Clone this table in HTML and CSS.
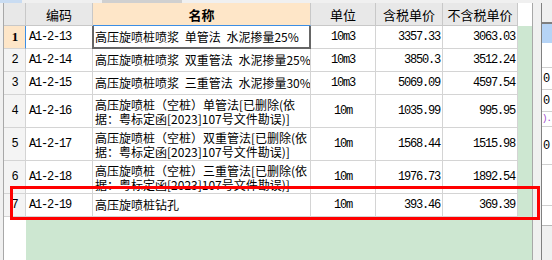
FILE: index.html
```html
<!DOCTYPE html>
<html lang="zh-CN">
<head>
<meta charset="utf-8">
<title>定额列表</title>
<link rel="stylesheet" href="styles.css">
</head>
<body>
<div class="tabs"><span class="tab-a"></span><span class="tab-b"></span></div>
<div class="main">
  <div class="gutter"></div>
  <div class="grid">
    <div class="h">&nbsp;</div>
    <div class="h">编码</div>
    <div class="h h-name">名称</div>
    <div class="h">单位</div>
    <div class="h">含税单价</div>
    <div class="h">不含税单价</div>
    <div class="h-fill"></div>

    <div class="c num num-cur">1</div>
    <div class="c code">A1-2-13</div>
    <div class="c name sel">高压旋喷桩喷浆 单管法 水泥掺量25%</div>
    <div class="c unit">10m3</div>
    <div class="c price">3357.33</div>
    <div class="c price">3063.03</div>
    <div class="b-fill"></div>

    <div class="c num">2</div>
    <div class="c code">A1-2-14</div>
    <div class="c name">高压旋喷桩喷浆 双重管法 水泥掺量25%</div>
    <div class="c unit">10m3</div>
    <div class="c price">3850.3</div>
    <div class="c price">3512.24</div>

    <div class="c num">3</div>
    <div class="c code">A1-2-15</div>
    <div class="c name">高压旋喷桩喷浆 三重管法 水泥掺量30%</div>
    <div class="c unit">10m3</div>
    <div class="c price">5069.09</div>
    <div class="c price">4597.54</div>

    <div class="c num">4</div>
    <div class="c code">A1-2-16</div>
    <div class="c name multi">高压旋喷桩（空桩）单管法[已删除(依<br>据：粤标定函[2023]107号文件勘误)]</div>
    <div class="c unit">10m</div>
    <div class="c price">1035.99</div>
    <div class="c price">995.95</div>

    <div class="c num">5</div>
    <div class="c code">A1-2-17</div>
    <div class="c name multi">高压旋喷桩（空桩）双重管法[已删除(依<br>据：粤标定函[2023]107号文件勘误)]</div>
    <div class="c unit">10m</div>
    <div class="c price">1568.44</div>
    <div class="c price">1515.98</div>

    <div class="c num">6</div>
    <div class="c code">A1-2-18</div>
    <div class="c name multi">高压旋喷桩（空桩）三重管法[已删除(依<br>据：粤标定函[2023]107号文件勘误)]</div>
    <div class="c unit">10m</div>
    <div class="c price">1976.73</div>
    <div class="c price">1892.54</div>

    <div class="c num">7</div>
    <div class="c code">A1-2-19</div>
    <div class="c name">高压旋喷桩钻孔</div>
    <div class="c unit">10m</div>
    <div class="c price">393.46</div>
    <div class="c price">369.39</div>

    <div class="num-fill"></div>
  </div>
  <div class="splitter"></div>
  <div class="panel">
    <div class="p-top"></div>
    <div class="p-blue"></div>
    <div class="p-blank"></div>
    <div class="p-row">0</div>
    <div class="p-row">0</div>
    <div class="p-purple">).</div>
    <div class="p-row p-tall">0</div>
    <div class="p-gap"></div>
    <div class="p-row2"></div>
    <div class="p-rest"></div>
  </div>
</div>
<div class="highlight"></div>
</body>
</html>
```

FILE: styles.css
```css
* { box-sizing: border-box; }
html, body { margin: 0; padding: 0; }
body {
  width: 552px;
  height: 260px;
  overflow: hidden;
  position: relative;
  background: #f0f0f0;
  font-family: "Noto Sans CJK SC", "Liberation Sans", sans-serif;
  color: #000;
}
.tabs {
  height: 3px;
  display: flex;
  background: #f0f0f0;
}
.tab-a { width: 22px; background: #c9dcf2; }
.tab-b { width: 80px; margin-left: 80px; background: #d0d0d0; }

.main {
  display: flex;
  height: 257px;
}
.gutter { width: 3px; background: #f0f0f0; }
.grid {
  width: 529px;
  border-left: 1px solid #a8a8a8;
  background: #cde7d1;
  display: grid;
  grid-template-columns: 22px 67px 218px 65px 67px 75px 14px;
  grid-template-rows: 23px 23px 23px 23px 33px 33px 33px 23px 1fr;
}
.h {
  background: #e8e8e8;
  border-right: 1px solid #c8c8c8;
  border-bottom: 1px solid #c8c8c8;
  display: flex;
  align-items: center;
  justify-content: center;
  font-size: 13px;
  line-height: 15px;
  white-space: nowrap;
}
.h-name {
  background: #fee6c8;
  font-weight: bold;
  border-bottom-color: #3c8ee4;
}
.h-fill { background: #fff; }
.b-fill { grid-column: 7; grid-row: 2 / 10; background: #cde7d1; }
.num-fill { grid-column: 1; grid-row: 9; background: #fff; }

.c {
  background: #fff;
  border-right: 1px solid #d4d4d4;
  border-bottom: 1px solid #d4d4d4;
  display: flex;
  align-items: center;
  overflow: hidden;
  white-space: nowrap;
}
.num {
  background: #f4f4f4;
  justify-content: center;
  font-family: "Liberation Mono", monospace;
  font-size: 12px;
  letter-spacing: -1px;
}
.num-cur {
  background: #fee6c8;
  font-weight: bold;
  font-family: "Liberation Serif", serif;
  font-size: 13px;
  border-right-color: #3c8ee4;
}
.code, .unit, .price {
  font-family: "Liberation Mono", monospace;
  font-size: 12px;
  letter-spacing: -1.2px;
}
.code { padding-left: 3px; }
.unit { justify-content: center; }
.price { justify-content: flex-end; padding-right: 2px; }
.name {
  padding-left: 2px;
  font-size: 12px;
  line-height: 14px;
  word-spacing: 3px;
}
.multi { padding-top: 1px; }
.sel {
  border-right-color: #666;
  border-bottom-color: #666;
  box-shadow: -1px 0 0 #666, inset 1px 0 0 #666, inset -1px 0 0 #666, inset 0 -1px 0 #666;
}

.splitter {
  width: 10px;
  border-left: 1px solid #a8a8a8;
  border-right: 1px solid #808080;
  background: #f0f0f0;
}
.panel {
  width: 10px;
  display: flex;
  flex-direction: column;
  background: #fff;
  font-family: "Liberation Mono", monospace;
  font-size: 12px;
}
.p-top { height: 21px; background: #f0f0f0; border-bottom: 2px solid #7f7f7f; }
.p-blue { height: 19px; background: #b6d4f6; }
.p-blank { height: 25px; border-bottom: 1px solid #d0d0d0; }
.p-row {
  height: 22px;
  border-bottom: 1px solid #d0d0d0;
  padding-left: 1px;
  display: flex;
  align-items: center;
}
.p-purple {
  height: 15px;
  color: #9a3fc8;
  font-size: 9px;
  letter-spacing: -1px;
  line-height: 11px;
  padding-top: 2px;
  border-bottom: 1px solid #d0d0d0;
}
.p-tall { height: 38px; }
.p-gap { height: 41px; border-bottom: 1px solid #d0d0d0; }
.p-row2 { height: 20px; border-bottom: 1px solid #b8b8b8; }
.p-rest { flex: 1; background: #f0f0f0; }

.highlight {
  position: absolute;
  left: 10px;
  top: 186px;
  width: 530px;
  height: 34px;
  border: 3px solid #ff0000;
}
```
